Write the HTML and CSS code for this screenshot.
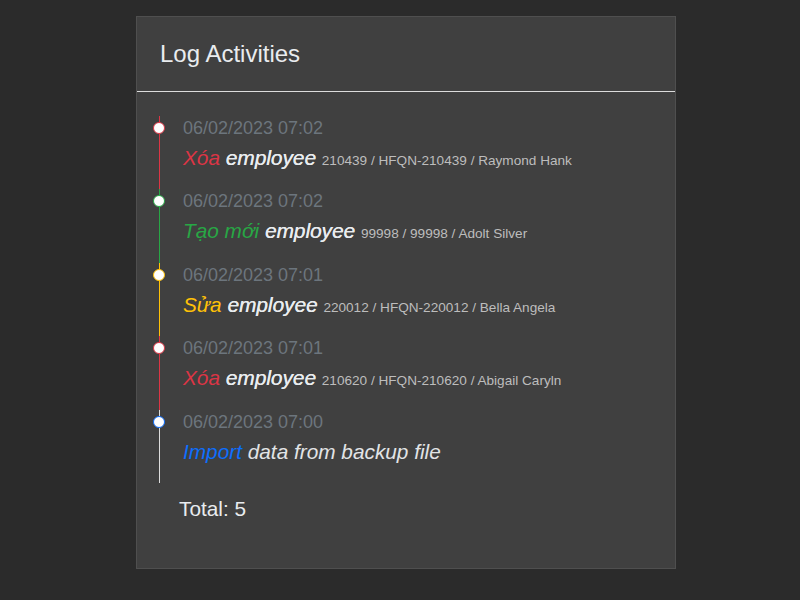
FILE: index.html
```html
<!DOCTYPE html>
<html>
<head>
<meta charset="utf-8">
<link rel="stylesheet" href="styles.css">
</head>
<body>
<div class="page">
  <section class="card">
    <header class="card-header"><h1 class="title">Log Activities</h1></header>
    <div class="card-body">
      <ul class="timeline">
        <li class="item red">
          <span class="dot"></span>
          <div class="date">06/02/2023 07:02</div>
          <div class="line"><span class="action">Xóa</span> <span class="object">employee</span> <span class="detail">210439 / HFQN-210439 / Raymond Hank</span></div>
        </li>
        <li class="item green">
          <span class="dot"></span>
          <div class="date">06/02/2023 07:02</div>
          <div class="line"><span class="action">Tạo mới</span> <span class="object">employee</span> <span class="detail">99998 / 99998 / Adolt Silver</span></div>
        </li>
        <li class="item yellow">
          <span class="dot"></span>
          <div class="date">06/02/2023 07:01</div>
          <div class="line"><span class="action">Sửa</span> <span class="object">employee</span> <span class="detail">220012 / HFQN-220012 / Bella Angela</span></div>
        </li>
        <li class="item red">
          <span class="dot"></span>
          <div class="date">06/02/2023 07:01</div>
          <div class="line"><span class="action">Xóa</span> <span class="object">employee</span> <span class="detail">210620 / HFQN-210620 / Abigail Caryln</span></div>
        </li>
        <li class="item blue">
          <span class="dot"></span>
          <div class="date">06/02/2023 07:00</div>
          <div class="line"><span class="action">Import</span> <span class="plain">data from backup file</span></div>
        </li>
      </ul>
      <div class="total">Total: 5</div>
    </div>
  </section>
</div>
</body>
</html>
```

FILE: styles.css
```css
html, body {
  margin: 0;
  padding: 0;
  background: #2b2b2b;
  font-family: "Liberation Sans", Arial, sans-serif;
}
.page {
  padding: 16px 0 0 136px;
}
.card {
  width: 538px;
  background: #404040;
  border: 1px solid #4f4f4f;
}
.card-header {
  height: 74px;
  border-bottom: 1px solid #dcdcdc;
  display: flex;
  align-items: center;
  padding-left: 23px;
}
.title {
  margin: 0;
  font-size: 24px;
  font-weight: normal;
  color: #e9ecef;
}
.card-body {
  padding: 24px 0 47px 22px;
}
.timeline {
  list-style: none;
  margin: 0;
  padding: 0;
}
.item {
  position: relative;
  border-left: 1px solid #dcdcdc;
  padding: 0 0 17.4px 23px;
}
.dot {
  position: absolute;
  left: -7px;
  top: 6px;
  width: 10px;
  height: 10px;
  border-radius: 50%;
  background: #fff;
  border: 1.5px solid #dcdcdc;
}
.date {
  height: 24px;
  line-height: 24px;
  font-size: 18px;
  color: #6c757d;
}
.line {
  margin-top: 4px;
  height: 28px;
  line-height: 28px;
  font-style: italic;
  font-size: 20.8px;
  color: #e9ecef;
  white-space: nowrap;
}
.object {
  text-shadow: 0.25px 0 0 #e9ecef;
}
.plain {
  color: #e2e4e6;
}
.detail {
  font-style: normal;
  font-size: 13.6px;
  color: #bdbdbd;
}
.red { border-left-color: #dc3545; }
.red .dot { border-color: #dc3545; }
.red .action { color: #dc3545; }
.green { border-left-color: #28a745; }
.green .dot { border-color: #28a745; }
.green .action { color: #28a745; }
.yellow { border-left-color: #ffc107; }
.yellow .dot { border-color: #ffc107; }
.yellow .action { color: #ffc107; }
.blue { border-left-color: #dcdcdc; }
.blue .dot { border-color: #0d6efd; }
.blue .action { color: #0d6efd; }
.total {
  margin: 14px 0 0 20px;
  line-height: 24px;
  font-size: 20.8px;
  color: #e9ecef;
}
```
